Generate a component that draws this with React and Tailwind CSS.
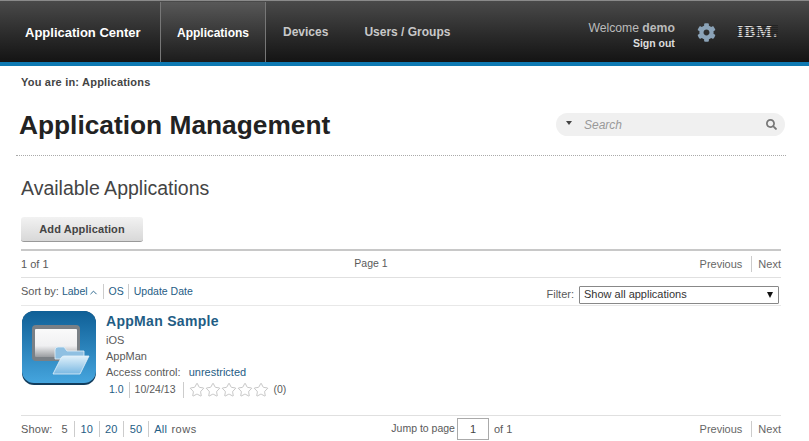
import React from "react";
import { FaCog, FaSearch } from "react-icons/fa";
import { Star, ChevronUp } from "lucide-react";

function AppIcon() {
  return (
    <svg width="74" height="74" viewBox="0 0 74 74" className="shrink-0">
      <defs>
        <linearGradient id="bg" x1="0" y1="0" x2="0" y2="1">
          <stop offset="0" stopColor="#0f5f96" />
          <stop offset="1" stopColor="#45a5de" />
        </linearGradient>
        <linearGradient id="screen" x1="0" y1="0" x2="0" y2="1">
          <stop offset="0" stopColor="#fafafa" />
          <stop offset="0.6" stopColor="#f0f0f2" />
          <stop offset="1" stopColor="#9a9da1" />
        </linearGradient>
        <linearGradient id="folder" x1="0" y1="0" x2="0" y2="1">
          <stop offset="0" stopColor="#dff0fa" />
          <stop offset="1" stopColor="#7ab8e2" />
        </linearGradient>
      </defs>
      <rect x="0" y="0" width="74" height="74" rx="12" fill="#123c5c" />
      <rect x="0" y="0" width="74" height="72" rx="12" fill="url(#bg)" />
      <rect x="10" y="14" width="48" height="36" rx="4" fill="#7a8086" />
      <rect x="13" y="18" width="42" height="28" rx="1" fill="url(#screen)" />
      <path d="M33 46 L33 39 Q33 36 36 36 L42 36 L45 40 L62 40 L62 48 L33 48 Z" fill="#8fc0e2" stroke="#e4f1fa" strokeWidth="0.8" />
      <path d="M31 63 L39 47 Q40 45 42 45 L67 45 L58 63 Z" fill="url(#folder)" stroke="#e4f1fa" strokeWidth="0.8" />
    </svg>
  );
}

function Pager() {
  return (
    <div className="flex items-center text-[#666]">
      <span className="pr-[9px]">Previous</span>
      <span className="border-l border-[#ccc] pl-[6px]">Next</span>
    </div>
  );
}

export default function App() {
  return (
    <div className="w-[809px] h-[441px] overflow-hidden bg-white font-['Liberation_Sans',Arial,sans-serif] text-[#5a5a5a] text-[11px]">
      {/* top bar */}
      <header className="h-[66px] border-t border-[#8a8a8a] border-b-4 border-b-[#0e79b2] bg-gradient-to-b from-[#4a4a4a] to-[#141414] flex items-stretch text-white">
        <div className="w-[160px] pl-[25px] pt-[22px] text-[13px] font-bold">Application Center</div>
        <div className="w-[106px] mt-[1px] border-x border-[#777] bg-gradient-to-b from-[#585858] to-[#1c1c1c] flex items-center justify-center pt-[1px] text-[12px] font-bold">
          Applications
        </div>
        <div className="pl-[17px] pt-[1px] flex items-center text-[12px] font-bold text-[#c8c8c8]">Devices</div>
        <div className="pl-[36px] pt-[1px] flex items-center text-[12px] font-bold text-[#c8c8c8]">Users / Groups</div>
        <div className="ml-auto flex items-center pr-[31px]">
          <div className="text-right leading-none pt-[7px]">
            <div className="text-[12.2px] text-[#bbb]">Welcome <span className="font-bold">demo</span></div>
            <div className="mt-[4px] text-[10.5px] font-bold text-[#ddd]">Sign out</div>
          </div>
          <FaCog className="ml-[22px] mt-[1px] text-[#8ba3b8]" size={19} />
          <div className="relative ml-[21px] mt-[1px] font-['Liberation_Serif',serif] text-[16.5px] font-bold leading-none tracking-[1px] text-[#ddd]">
            IBM.
            <div className="absolute inset-0 bg-[repeating-linear-gradient(to_bottom,transparent_0,transparent_1px,rgba(30,30,30,0.7)_1px,rgba(30,30,30,0.7)_2px)]" />
          </div>
        </div>
      </header>

      <div className="px-[21px] pt-[10px] text-[11px] font-bold leading-[13px] tracking-[0.2px] text-[#444]">You are in: Applications</div>

      {/* title + search */}
      <div className="ml-[16px] mr-[23px] mt-[20px] h-[47px] border-b border-dotted border-[#aaa] flex items-start justify-between pl-[3px] pr-[1px]">
        <h1 className="text-[26.3px] font-bold leading-[32px] text-[#222]">Application Management</h1>
        <div className="mt-[4px] w-[229px] h-[23px] rounded-full bg-[#f0f0f0] flex items-center pl-[10px] pr-[8px]">
          <span className="mb-[4px] w-0 h-0 border-x-[3.5px] border-x-transparent border-t-[4px] border-t-[#444]" />
          <span className="ml-[12px] text-[12px] italic text-[#999]">Search</span>
          <FaSearch className="ml-auto text-[#777]" size={11} />
        </div>
      </div>

      <div className="px-[21px]">
        <h2 className="mt-[20px] text-[19.5px] leading-[24px] text-[#444]">Available Applications</h2>
        <button className="mt-[17px] block w-[122px] h-[25px] rounded-[3px] bg-gradient-to-b from-[#f2f2f2] to-[#d8d8d8] border-b border-[#999] text-[11px] font-bold tracking-[0.1px] text-[#444]">
          Add Application
        </button>

        {/* paging row */}
        <div className="mt-[7px] w-[760px] h-[29px] border-t-2 border-[#c8c8c8] border-b border-b-[#e0e0e0] grid grid-cols-3 items-center">
          <span>1 of 1</span>
          <span className="pl-[80px] text-[10.5px]">Page 1</span>
          <div className="justify-self-end"><Pager /></div>
        </div>

        {/* sort + filter */}
        <div className="w-[760px] h-[28px] border-b border-[#e8e8e8] flex items-center">
          <span>Sort by:</span>
          <span className="ml-[3px] text-[10.5px] text-[#1f5d85]">Label</span>
          <ChevronUp size={11} className="text-[#1f5d85] mt-[2px]" />
          <span className="ml-[4px] border-l border-[#ccc] pl-[5px] text-[10.5px] text-[#1f5d85]">OS</span>
          <span className="ml-[4px] border-l border-[#ccc] pl-[5px] text-[10.5px] text-[#1f5d85]">Update Date</span>
          <span className="ml-auto mt-[6px]">Filter:</span>
          <div className="ml-[5px] mr-[2px] mt-[6px] w-[200px] h-[18px] border border-[#888] rounded-[1px] flex items-center justify-between pl-[4px] pr-[5px] text-[#333]">
            Show all applications
            <span className="w-0 h-0 border-x-[3.5px] border-x-transparent border-t-[6px] border-t-[#111]" />
          </div>
        </div>

        {/* app row */}
        <div className="w-[760px] h-[110px] border-b border-[#e0e0e0] pt-[5px] flex items-start pl-[1px]">
          <AppIcon />
          <div className="ml-[10px] flex flex-col">
            <span className="text-[14px] font-bold leading-[20px] tracking-[0.3px] text-[#1f5d85]">AppMan Sample</span>
            <span className="mt-[1px] leading-[16px]">iOS</span>
            <span className="leading-[16px]">AppMan</span>
            <span className="leading-[16px]">Access control: <span className="ml-[5px] text-[#1f5d85]">unrestricted</span></span>
            <div className="mt-[2px] h-[16px] flex items-center pl-[3px] text-[10.5px]">
              <span className="pr-[5px] text-[#1f5d85]">1.0</span>
              <span className="border-l border-[#ccc] pl-[5px] pr-[8px]">10/24/13</span>
              <span className="border-l border-[#ccc] pl-[5px] flex items-center">
                <Star size={16} strokeWidth={1} className="text-[#aaa]" />
                <Star size={16} strokeWidth={1} className="text-[#aaa]" />
                <Star size={16} strokeWidth={1} className="text-[#aaa]" />
                <Star size={16} strokeWidth={1} className="text-[#aaa]" />
                <Star size={16} strokeWidth={1} className="text-[#aaa]" />
                <span className="ml-[4px]">(0)</span>
              </span>
            </div>
          </div>
        </div>

        {/* footer */}
        <div className="w-[760px] h-[26px] grid grid-cols-3 items-center">
          <div className="flex items-center tracking-[0.2px]">
            <span>Show:</span>
            <span className="ml-[9px] pr-[6px]">5</span>
            <span className="border-l border-[#ccc] px-[5.5px] text-[#1f5d85]">10</span>
            <span className="border-l border-[#ccc] px-[5.5px] text-[#1f5d85]">20</span>
            <span className="border-l border-[#ccc] px-[5.5px] text-[#1f5d85]">50</span>
            <span className="border-l border-[#ccc] pl-[5.5px] text-[#1f5d85]">All <span className="ml-[1px] tracking-[0.5px] text-[#5a5a5a]">rows</span></span>
          </div>
          <div className="flex items-center pl-[117px]">
            <span className="whitespace-nowrap text-[10.5px]">Jump to page</span>
            <span className="ml-[2px] w-[32px] h-[22px] border border-[#aaa] flex items-center justify-center text-[#444]">1</span>
            <span className="ml-[5px] whitespace-nowrap">of 1</span>
          </div>
          <div className="justify-self-end"><Pager /></div>
        </div>
      </div>
    </div>
  );
}
